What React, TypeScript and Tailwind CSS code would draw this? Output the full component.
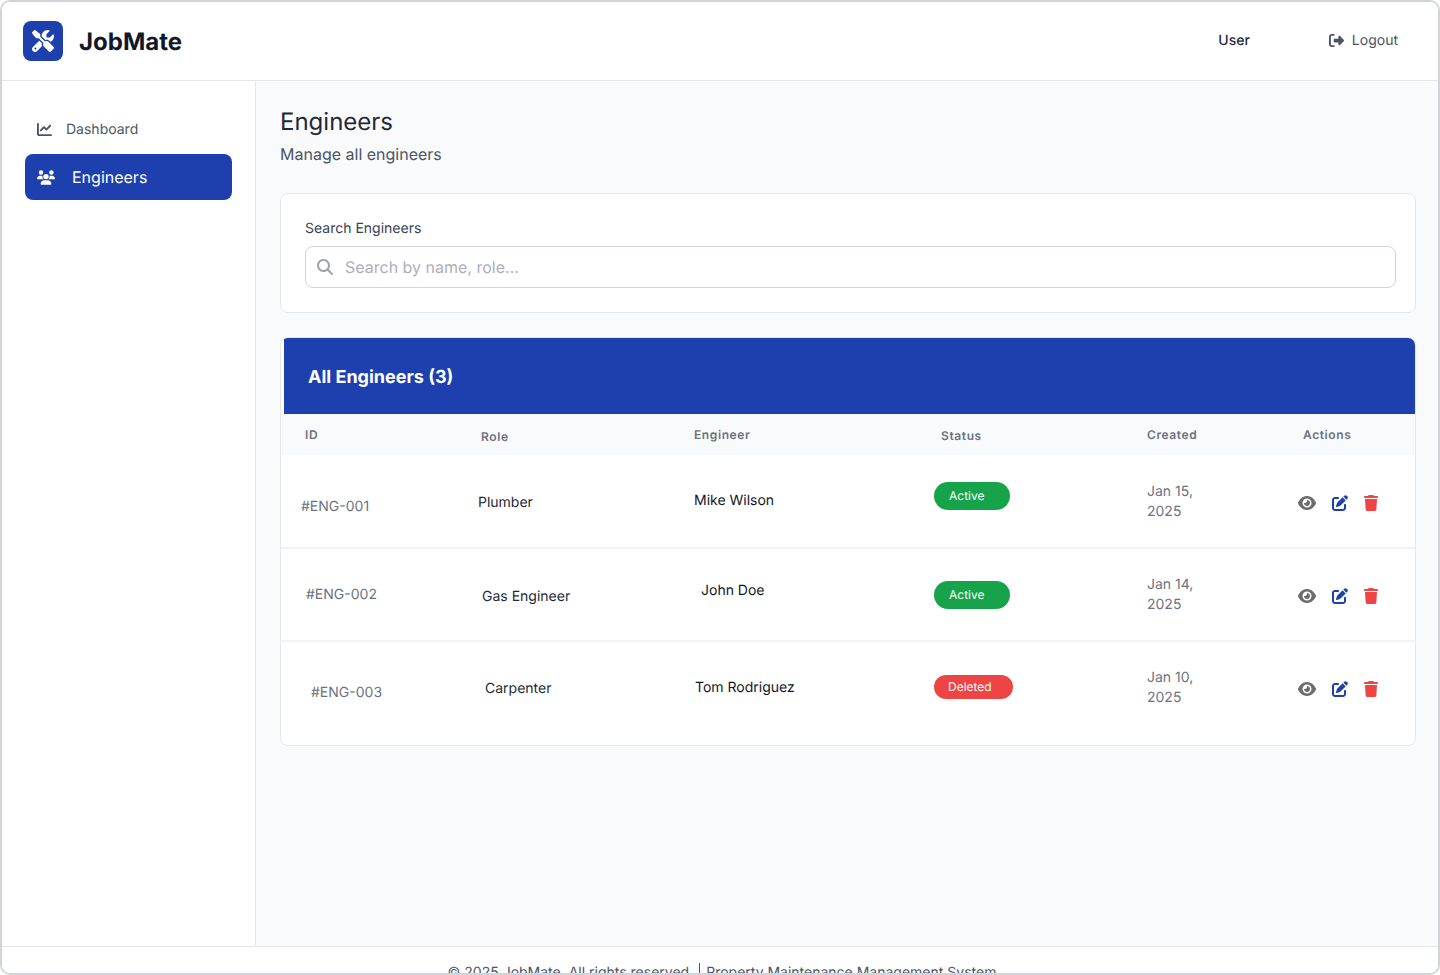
import React from "react";
import {
  FaChartLine,
  FaEye,
  FaMagnifyingGlass,
  FaPenToSquare,
  FaRightFromBracket,
  FaScrewdriverWrench,
  FaTrash,
  FaUsers,
} from "react-icons/fa6";

const grid = "grid grid-cols-[176px_213px_247px_206px_156px_1fr] items-start";

const headers = [
  { label: "ID", className: "pl-[24px] mt-[11px]" },
  { label: "Role", className: "pl-[24px] mt-[13px]" },
  { label: "Engineer", className: "pl-[24px] mt-[11px]" },
  { label: "Status", className: "pl-[24px] mt-[12px]" },
  { label: "Created", className: "pl-[24px] mt-[11px]" },
  { label: "Actions", className: "pl-[24px] mt-[11px]" },
];

const engineers = [
  {
    id: "#ENG-001",
    role: "Plumber",
    name: "Mike Wilson",
    status: "Active",
    date: "Jan 15,",
    year: "2025",
    rowClass: "h-[94px] border-b-2 border-[#f3f4f6]",
    idClass: "pl-[20px] mt-[42px]",
    roleClass: "pl-[21px] mt-[38px]",
    nameClass: "pl-[24px] mt-[36px]",
    badgeClass: "mt-[27px]",
    dateClass: "mt-[27px]",
    actionClass: "mt-[40px]",
  },
  {
    id: "#ENG-002",
    role: "Gas Engineer",
    name: "John Doe",
    status: "Active",
    date: "Jan 14,",
    year: "2025",
    rowClass: "h-[93px] border-b-2 border-[#f3f4f6]",
    idClass: "pl-[25px] mt-[36px]",
    roleClass: "pl-[25px] mt-[38px]",
    nameClass: "pl-[31px] mt-[32px]",
    badgeClass: "mt-[32px]",
    dateClass: "mt-[26px]",
    actionClass: "mt-[39px]",
  },
  {
    id: "#ENG-003",
    role: "Carpenter",
    name: "Tom Rodriguez",
    status: "Deleted",
    date: "Jan 10,",
    year: "2025",
    rowClass: "h-[103px]",
    idClass: "pl-[30px] mt-[41px]",
    roleClass: "pl-[28px] mt-[37px]",
    nameClass: "pl-[25px] mt-[36px]",
    badgeClass: "mt-[33px]",
    dateClass: "mt-[26px]",
    actionClass: "mt-[39px]",
  },
];

export default function App() {
  return (
    <div className="h-[975px] overflow-hidden bg-white font-['Inter',sans-serif] antialiased [text-rendering:geometricPrecision]">
      <div className="flex h-[975px] flex-col overflow-hidden rounded-[10px] border-2 border-[#d1d5db] bg-white">
        <header className="flex h-[79px] shrink-0 items-center justify-between border-b border-[#e5e7eb] bg-white">
          <div className="ml-[21px] flex items-center gap-4">
            <div className="flex h-10 w-10 items-center justify-center rounded-lg bg-[#1e40af] text-white">
              <FaScrewdriverWrench className="h-[22px] w-[22px]" />
            </div>
            <span className="mt-[1px] text-2xl font-bold text-[#111827]">JobMate</span>
          </div>
          <div className="mr-[40px] mb-[1px] flex items-center gap-[79px] text-sm">
            <span className="font-medium text-[#1f2937]">User</span>
            <span className="flex items-center gap-2 text-[#4b5563]">
              <FaRightFromBracket className="h-[15px] w-[15px]" />
              Logout
            </span>
          </div>
        </header>

        <div className="flex min-h-0 flex-1">
          <aside className="w-[254px] shrink-0 border-r border-[#e5e7eb] bg-white px-[23px] pt-[24px]">
            <div className="flex h-[49px] items-center gap-[14px] pl-[12px] text-sm text-[#4b5563]">
              <FaChartLine className="h-[15px] w-[15px]" />
              Dashboard
            </div>
            <div className="flex h-[46px] items-center gap-[17px] rounded-lg bg-[#1e40af] pl-[12px] text-white">
              <FaUsers className="h-[15px] w-[18px]" />
              Engineers
            </div>
          </aside>

          <main className="min-w-0 flex-1 bg-[#f9fafb] pl-[24px] pr-[22px] pt-[25px]">
            <h1 className="text-2xl leading-[32px] text-[#1f2937]">Engineers</h1>
            <p className="mt-[4px] leading-[24px] text-[#4b5563]">Manage all engineers</p>

            <section className="mt-[27px] h-[120px] rounded-lg border border-[#e5e7eb] bg-white pl-[24px] pr-[19px] pt-[25px]">
              <label className="block text-sm leading-[20px] text-[#374151]">Search Engineers</label>
              <div className="mt-[7px] flex h-[42px] items-center gap-[12px] rounded-lg border border-[#d1d5db] bg-white pl-[11px]">
                <FaMagnifyingGlass className="h-4 w-4 text-[#9ca3af]" />
                <span className="text-base text-[#adaebc]">Search by name, role...</span>
              </div>
            </section>

            <section className="mt-[24px] h-[409px] overflow-hidden rounded-lg border border-[#e5e7eb] bg-white">
              <div className="ml-[3px] flex h-[76px] items-center bg-[#1e40af] pl-[24px] pt-[4px] text-lg font-bold text-white">
                All Engineers (3)
              </div>
              <div className={`${grid} h-[41px] bg-[#f9fafb]`}>
                {headers.map((h) => (
                  <div
                    key={h.label}
                    className={`${h.className} text-xs font-semibold leading-[20px] tracking-[0.6px] text-[#6b7280]`}
                  >
                    {h.label}
                  </div>
                ))}
              </div>
              {engineers.map((e) => (
                <div key={e.id} className={`${grid} ${e.rowClass} text-sm leading-[20px]`}>
                  <div className={`${e.idClass} text-[#6b7280]`}>{e.id}</div>
                  <div className={`${e.roleClass} text-[#1f2937]`}>{e.role}</div>
                  <div className={`${e.nameClass} text-[#111827]`}>{e.name}</div>
                  <div className={`${e.badgeClass} pl-[17px]`}>
                    <span
                      className={
                        e.status === "Active"
                          ? "flex h-[28px] w-[76px] items-center rounded-full bg-[#16a34a] pl-[15px] text-xs text-white"
                          : "flex h-[24px] w-[79px] items-center rounded-full bg-[#ef4444] pl-[14px] text-xs text-white"
                      }
                    >
                      {e.status}
                    </span>
                  </div>
                  <div className={`${e.dateClass} pl-[24px] text-[#6b7280]`}>
                    {e.date}
                    <br />
                    {e.year}
                  </div>
                  <div className={`${e.actionClass} flex items-center pl-[19px]`}>
                    <FaEye className="h-4 w-[18px] text-[#6b6b6b]" />
                    <FaPenToSquare className="ml-[16px] h-4 w-4 text-[#1e40af]" />
                    <FaTrash className="ml-[16px] h-4 w-[14px] text-[#ef4444]" />
                  </div>
                </div>
              ))}
            </section>
          </main>
        </div>

        <footer className="h-[27px] shrink-0 border-t border-[#e5e7eb] bg-white">
          <div className="mt-[16px] flex items-center justify-center pl-[4px] text-sm leading-[20px] text-[#4b5563]">
            <span>© 2025 JobMate. All rights reserved.</span>
            <span className="ml-[6px] border-l border-[#4b5563] pl-[6px]">Property Maintenance Management System</span>
          </div>
        </footer>
      </div>
    </div>
  );
}
